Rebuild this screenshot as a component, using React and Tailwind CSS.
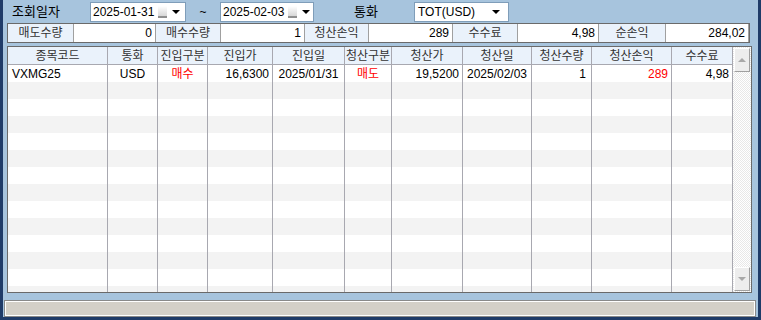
const font = { fontFamily: '"Liberation Sans", "Noto Sans CJK KR", sans-serif' }

const summary = [
  { label: '매도수량', lw: 'w-[65px]', value: '0', vw: 'w-[81px]' },
  { label: '매수수량', lw: 'w-[64px]', value: '1', vw: 'w-[83px]' },
  { label: '청산손익', lw: 'w-[63px]', value: '289', vw: 'w-[83px]' },
  { label: '수수료', lw: 'w-[64px]', value: '4,98', vw: 'w-[80px]' },
  { label: '순손익', lw: 'w-[66px]', value: '284,02', vw: 'w-[82px]' },
]

const columns = [
  { title: '종목코드', w: 'w-[100px]', align: 'justify-start pl-[4px]' },
  { title: '통화', w: 'w-[50px]', align: 'justify-center' },
  { title: '진입구분', w: 'w-[50px]', align: 'justify-center' },
  { title: '진입가', w: 'w-[65px]', align: 'justify-end pr-[3px]' },
  { title: '진입일', w: 'w-[72px]', align: 'justify-center' },
  { title: '청산구분', w: 'w-[47px]', align: 'justify-center' },
  { title: '청산가', w: 'w-[71px]', align: 'justify-end pr-[3px]' },
  { title: '청산일', w: 'w-[69px]', align: 'justify-center' },
  { title: '청산수량', w: 'w-[60px]', align: 'justify-end pr-[5px]' },
  { title: '청산손익', w: 'w-[80px]', align: 'justify-end pr-[3px]' },
  { title: '수수료', w: 'w-[61px]', align: 'justify-end pr-[3px]' },
]

const firstRow = [
  { v: 'VXMG25' },
  { v: 'USD' },
  { v: '매수', red: true },
  { v: '16,6300' },
  { v: '2025/01/31' },
  { v: '매도', red: true },
  { v: '19,5200' },
  { v: '2025/02/03' },
  { v: '1' },
  { v: '289', red: true },
  { v: '4,98' },
]

function DateBox({ value, w }) {
  return (
    <div className={`${w} h-[20px] bg-white border border-[#7f9db9] flex items-center`}>
      <span className="w-[66px] pl-[2px] text-[12px] text-black leading-none whitespace-nowrap">{value}</span>
      <span className="w-[9px] h-[12px] bg-gradient-to-b from-white to-[#d8d8d8] border-b-2 border-[#909090] ml-[1px]"></span>
      <span className="w-0 h-0 border-l-[4px] border-r-[4px] border-t-[4px] border-l-transparent border-r-transparent border-t-black ml-[5px]"></span>
    </div>
  )
}

function ScrollButton({ up }) {
  return (
    <div className="w-[16px] h-[24px] bg-[#ededed] border border-t-white border-l-white border-r-[#a0a0a0] border-b-[#a0a0a0] flex items-center justify-center">
      {up ? (
        <span className="w-0 h-0 border-l-[4px] border-r-[4px] border-b-[4px] border-l-transparent border-r-transparent border-b-[#a8a8a8]"></span>
      ) : (
        <span className="w-0 h-0 border-l-[4px] border-r-[4px] border-t-[4px] border-l-transparent border-r-transparent border-t-[#a8a8a8]"></span>
      )}
    </div>
  )
}

export default function App() {
  const rows = Array.from({ length: 14 }, (_, i) => i)
  return (
    <div style={font} className="w-[761px] h-[320px] bg-[#a7c4dd] border-l-[3px] border-r-[3px] border-b-[3px] border-[#1f3b68] flex flex-col overflow-hidden text-black">
      {/* top filter row */}
      <div className="h-[22px] flex items-center pt-[1px]">
        <div className="w-[87px] pl-[9px] text-[13px]">조회일자</div>
        <DateBox value="2025-01-31" w="w-[96px]" />
        <div className="w-[34px] text-center text-[12px]">~</div>
        <DateBox value="2025-02-03" w="w-[94px]" />
        <div className="w-[100px] pl-[40px] text-[13px]">통화</div>
        <div className="w-[95px] h-[20px] bg-white border border-[#7f9db9] flex items-center">
          <span className="pl-[3px] text-[12px] flex-1">TOT(USD)</span>
          <span className="w-0 h-0 border-l-[4px] border-r-[4px] border-t-[4px] border-l-transparent border-r-transparent border-t-black mr-[8px]"></span>
        </div>
      </div>

      {/* summary row */}
      <div className="ml-[4px] mt-[1px] w-[743px] h-[20px] border border-[#6a6a6a] flex bg-[#a0a0a0] gap-px">
        {summary.map((s, i) => (
          <div key={i} className="flex gap-px">
            <div className={`${s.lw} bg-[#eaf2fb] text-[12px] text-[#333] flex items-center justify-center`}>{s.label}</div>
            <div className={`${s.vw} bg-white text-[12px] flex items-center justify-end pr-[3px]`}>{s.value}</div>
          </div>
        ))}
      </div>

      {/* grid */}
      <div className="ml-[4px] mt-[3px] w-[745px] h-[247px] border border-[#6a6a6a] bg-white flex overflow-hidden">
        <div className="flex flex-col w-[725px]">
          <div className="flex h-[18px] bg-[#eaf2fb] border-b border-[#a8a8b0] shrink-0">
            {columns.map((c, i) => (
              <div key={i} className={`${c.w} border-r border-[#a8a8b0] text-[12px] text-[#333] flex items-center justify-center`}>{c.title}</div>
            ))}
          </div>
          {rows.map((r) => (
            <div key={r} className={`flex h-[17px] shrink-0 ${r % 2 === 0 ? 'bg-white' : 'bg-[#f3f3f3]'}`}>
              {columns.map((c, i) => (
                <div key={i} className={`${c.w} border-r border-[#a8a8b0] text-[12px] flex items-center ${c.align} ${r === 0 && firstRow[i].red ? 'text-[#ff0000]' : 'text-black'}`}>
                  {r === 0 ? firstRow[i].v : ''}
                </div>
              ))}
            </div>
          ))}
        </div>
        <div className="w-[18px] flex flex-col pl-[1px] pt-[1px] pb-[1px] bg-[repeating-conic-gradient(#ffffff_0_25%,#e8e8e8_0_50%)] bg-[length:2px_2px]">
          <ScrollButton up />
          <div className="flex-1"></div>
          <ScrollButton />
        </div>
      </div>

      {/* status bar */}
      <div className="ml-[1px] mt-[7px] w-[752px] h-[17px] border border-[#8a8a8a] bg-white p-px">
        <div className="w-full h-full bg-[#d4d0c8]"></div>
      </div>
    </div>
  )
}
